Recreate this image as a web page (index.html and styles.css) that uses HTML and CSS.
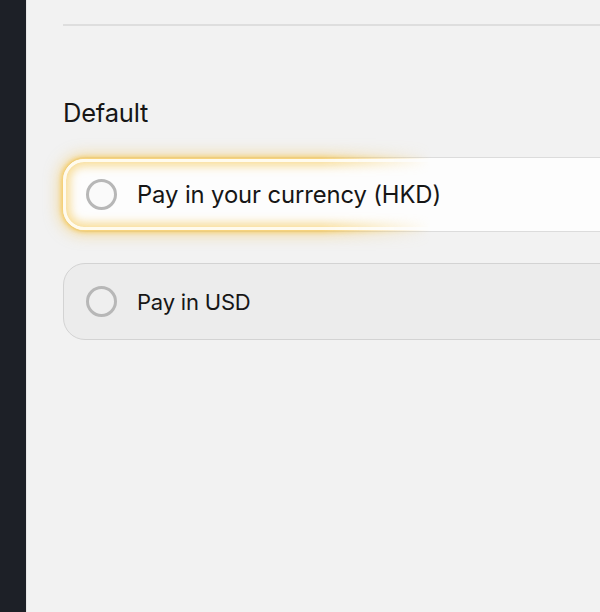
FILE: index.html
```html
<!DOCTYPE html>
<html>
<head>
<meta charset="utf-8">
<link rel="stylesheet" href="styles.css">
</head>
<body>
<div class="app">
  <aside class="sidebar"></aside>
  <main class="main">
    <div class="divider"></div>
    <h2 class="heading">Default</h2>
    <div class="options">
      <label class="option option-active">
        <span class="glow"><span class="glow-ring"></span></span>
        <span class="radio"></span>
        <span class="label label-lg">Pay in your currency (HKD)</span>
      </label>
      <label class="option option-idle">
        <span class="radio"></span>
        <span class="label">Pay in USD</span>
      </label>
    </div>
  </main>
</div>
</body>
</html>
```

FILE: styles.css
```css
html, body {
  margin: 0;
  padding: 0;
  height: 100%;
}
body {
  font-family: Inter, "Noto Sans", "Liberation Sans", sans-serif;
  background: #f2f2f2;
  color: #1a1a1a;
}
.app {
  display: flex;
  height: 612px;
  overflow: hidden;
}
.sidebar {
  width: 26px;
  flex: 0 0 26px;
  background: #1d2027;
  border-right: 1px solid #e6e6e6;
}
.main {
  flex: 1;
  padding: 24px 0 0 36px;
  overflow: hidden;
  background: #f2f2f2;
}
.divider {
  height: 2px;
  background: #dedede;
  width: 700px;
}
.heading {
  margin: 72px 0 0 0;
  font-size: 25.5px;
  line-height: 30px;
  font-weight: 400;
  letter-spacing: -0.2px;
  color: #161616;
}
.options {
  margin-top: 29px;
  display: flex;
  flex-direction: column;
  gap: 31px;
  width: 640px;
}
.option {
  position: relative;
  display: flex;
  align-items: center;
  gap: 20px;
  padding: 0 0 0 22px;
  border-radius: 22px;
  box-sizing: border-box;
}
.option-active {
  height: 75px;
  background: #fdfdfd;
  border: 1.5px solid #dcdcdc;
}
.option-idle {
  height: 77px;
  background: #ececec;
  border: 1.5px solid #d3d3d3;
}
.radio {
  width: 25px;
  height: 25px;
  flex: 0 0 25px;
  border: 3px solid #b7b7b7;
  border-radius: 50%;
  background: #fafafa;
  position: relative;
  z-index: 1;
}
.option-idle .radio {
  background: #efefef;
}
.label {
  font-size: 22px;
  color: #161616;
  position: relative;
  z-index: 1;
  letter-spacing: -0.2px;
}
.label-lg {
  font-size: 23.8px;
  letter-spacing: -0.1px;
}
.glow {
  position: absolute;
  left: -22px;
  top: -20px;
  right: -22px;
  bottom: -20px;
  padding: 21px 21px;
  box-sizing: border-box;
  -webkit-mask-image: linear-gradient(to right, #000 0%, #000 41%, transparent 57%);
  mask-image: linear-gradient(to right, #000 0%, #000 41%, transparent 57%);
  pointer-events: none;
}
.glow-ring {
  display: block;
  width: 100%;
  height: 100%;
  box-sizing: border-box;
  border: 3px solid #fffbee;
  border-radius: 21px;
  box-shadow: 0 0 4px 2px rgba(245, 198, 80, 0.8), 0 0 14px 5px rgba(245, 200, 90, 0.5), inset 0 0 10px 4px rgba(245, 198, 80, 0.6);
}
```
